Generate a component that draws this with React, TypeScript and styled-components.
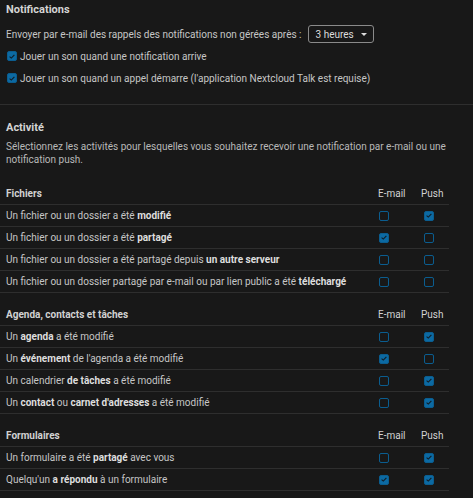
import React from "react";
import styled, { createGlobalStyle } from "styled-components";

const Global = createGlobalStyle`
  html, body {
    margin: 0;
    background: #181818;
  }
  body {
    font-family: Roboto, "Noto Sans", sans-serif;
    font-size: 10px;
    color: #c6c6c6;
  }
`;

const Page = styled.div`
  width: 473px;
  height: 498px;
  overflow: hidden;
  background: #181818;
`;

const Section = styled.section<{ $top: number }>`
  padding: ${(p) => p.$top}px 6px 0;
`;

const Heading = styled.h2`
  margin: 0;
  font-size: 11px;
  line-height: 14px;
  font-weight: 700;
  color: #d4d4d4;
`;

const ReminderRow = styled.div`
  display: flex;
  align-items: center;
  gap: 6px;
  margin-top: 8px;
  height: 18px;
  white-space: nowrap;
`;

const Select = styled.div`
  display: flex;
  align-items: center;
  justify-content: space-between;
  box-sizing: border-box;
  width: 66px;
  height: 18px;
  padding: 0 6px 0 7px;
  border: 1px solid #8a8a8a;
  border-radius: 3px;
  color: #dcdcdc;
`;

const Caret = styled.span`
  width: 0;
  height: 0;
  border-left: 3px solid transparent;
  border-right: 3px solid transparent;
  border-top: 3px solid #dcdcdc;
`;

const OptionRow = styled.label<{ $gap?: number }>`
  display: flex;
  align-items: center;
  gap: 3px;
  height: 22px;
  margin-top: ${(p) => p.$gap ?? 0}px;
  padding-left: 1px;
  white-space: nowrap;
`;

const Box = styled.span<{ $checked: boolean }>`
  display: inline-flex;
  align-items: center;
  justify-content: center;
  flex: none;
  box-sizing: border-box;
  width: 10px;
  height: 10px;
  border: 1.5px solid #0b5d8f;
  border-radius: 2px;
  background: ${(p) => (p.$checked ? "#0c6aa3" : "transparent")};
`;

const Divider = styled.hr<{ $top: number }>`
  margin: ${(p) => p.$top}px 0 0;
  border: 0;
  border-top: 1px solid #2e2e2e;
`;

const Description = styled.p`
  margin: 5px 0 0;
  line-height: 13px;
  color: #b9b9b9;
  width: 445px;
`;

const Group = styled.div<{ $top?: number }>`
  display: grid;
  grid-template-columns: minmax(0, 1fr) 45px 30px;
  width: 449px;
  margin-top: ${(p) => p.$top ?? 0}px;
`;

const HeaderCell = styled.div<{ $pad: number; $bold?: boolean }>`
  display: flex;
  align-items: center;
  height: 21px;
  padding: 11px 0 0 ${(p) => p.$pad}px;
  border-bottom: 1px solid #2e2e2e;
  font-weight: ${(p) => (p.$bold ? 700 : 400)};
  color: #d2d2d2;
  white-space: nowrap;
`;

const Cell = styled.div<{ $pad: number }>`
  display: flex;
  align-items: center;
  height: 21px;
  padding-left: ${(p) => p.$pad}px;
  border-bottom: 1px solid #2e2e2e;
  white-space: nowrap;

  b {
    font-weight: 700;
    color: #dedede;
  }
`;

const Check = ({ checked }: { checked: boolean }) => (
  <Box $checked={checked}>
    {checked && (
      <svg width="6" height="5" viewBox="0 0 6 5">
        <path d="M0.6 2.6 L2.3 4.1 L5.4 0.8" fill="none" stroke="#0f1c26" strokeWidth="1.1" />
      </svg>
    )}
  </Box>
);

type Row = { text: React.ReactNode; email: boolean; push: boolean };

const groups: { title: string; top?: number; rows: Row[] }[] = [
  {
    title: "Fichiers",
    top: 6,
    rows: [
      { text: <>Un fichier ou un dossier a été <b>modifié</b></>, email: false, push: true },
      { text: <>Un fichier ou un dossier a été <b>partagé</b></>, email: true, push: false },
      { text: <>Un fichier ou un dossier a été partagé depuis <b>un autre serveur</b></>, email: false, push: false },
      {
        text: <>Un fichier ou un dossier partagé par e-mail ou par lien public a été <b>téléchargé</b></>,
        email: false,
        push: false,
      },
    ],
  },
  {
    title: "Agenda, contacts et tâches",
    rows: [
      { text: <>Un <b>agenda</b> a été modifié</>, email: false, push: true },
      { text: <>Un <b>événement</b> de l'agenda a été modifié</>, email: true, push: false },
      { text: <>Un calendrier <b>de tâches</b> a été modifié</>, email: false, push: true },
      { text: <>Un <b>contact</b> ou <b>carnet d'adresses</b> a été modifié</>, email: false, push: true },
    ],
  },
  {
    title: "Formulaires",
    rows: [
      { text: <>Un formulaire a été <b>partagé</b> avec vous</>, email: false, push: true },
      { text: <>Quelqu'un <b>a répondu</b> à un formulaire</>, email: true, push: true },
    ],
  },
];

export default function App() {
  return (
    <Page>
      <Global />
      <Section $top={3}>
        <Heading>Notifications</Heading>
        <ReminderRow>
          <span>Envoyer par e-mail des rappels des notifications non gérées après :</span>
          <Select>
            3 heures
            <Caret />
          </Select>
        </ReminderRow>
        <OptionRow $gap={2}>
          <Check checked />
          Jouer un son quand une notification arrive
        </OptionRow>
        <OptionRow>
          <Check checked />
          Jouer un son quand un appel démarre (l'application Nextcloud Talk est requise)
        </OptionRow>
      </Section>
      <Divider $top={15} />
      <Section $top={16}>
        <Heading>Activité</Heading>
        <Description>
          Sélectionnez les activités pour lesquelles vous souhaitez recevoir une notification par e-mail ou une
          notification push.
        </Description>
      </Section>
      {groups.map((g) => (
        <Group key={g.title} $top={g.top}>
          <HeaderCell $pad={6} $bold>
            {g.title}
          </HeaderCell>
          <HeaderCell $pad={4}>E-mail</HeaderCell>
          <HeaderCell $pad={2}>Push</HeaderCell>
          {g.rows.map((r, i) => (
            <React.Fragment key={i}>
              <Cell $pad={6}>
                <span>{r.text}</span>
              </Cell>
              <Cell $pad={5}>
                <Check checked={r.email} />
              </Cell>
              <Cell $pad={5}>
                <Check checked={r.push} />
              </Cell>
            </React.Fragment>
          ))}
        </Group>
      ))}
    </Page>
  );
}
